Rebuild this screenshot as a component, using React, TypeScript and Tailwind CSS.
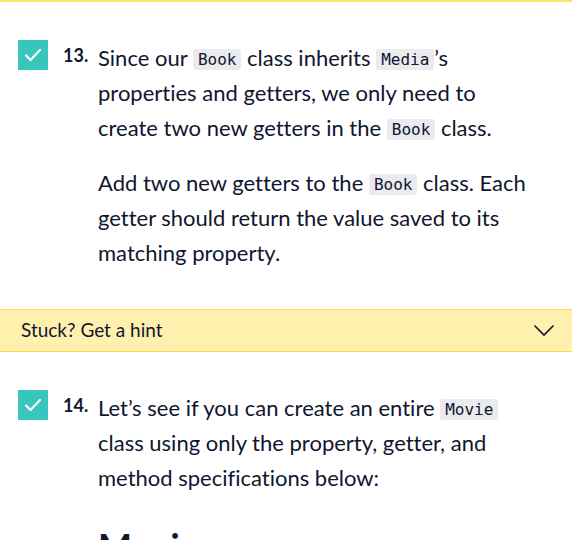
function Code({ children }: { children: string }) {
  return (
    <code className="rounded-[3px] bg-[#eaeaef] px-[5px] py-[1px] align-[1px] font-['DejaVu_Sans_Mono',monospace] text-[16px] leading-[18px] text-[#10162f]">
      {children}
    </code>
  );
}

function Check() {
  return (
    <div className="flex h-[30px] w-[30px] shrink-0 items-center justify-center bg-[#37c5bc]">
      <svg width="18" height="14" viewBox="0 0 18 14" fill="none">
        <path d="M2 7.5l4.5 4.5L16 2" stroke="white" strokeWidth="2.2" strokeLinecap="round" strokeLinejoin="round" />
      </svg>
    </div>
  );
}

function Step({ num, children }: { num: number; children: React.ReactNode }) {
  return (
    <div className="flex pl-[18px] pr-4">
      <Check />
      <span className="ml-[15px] w-[35px] shrink-0 pt-[3px] text-[18px] font-bold leading-[24px]">{num}.</span>
      <div className="flex flex-col gap-5 text-[22px] leading-[35px] [font-variant-ligatures:none]">{children}</div>
    </div>
  );
}

export default function App() {
  return (
    <div className="h-[540px] w-[572px] overflow-hidden bg-white font-['Lato',sans-serif] text-[#10162f]">
      <div className="h-[2px] bg-[#ffe36b]" />
      <div className="pt-[38px]">
        <Step num={13}>
          <p>
            Since our <Code>Book</Code> class inherits <Code>Media</Code>’s
            <br />
            properties and getters, we only need to
            <br />
            create two new getters in the <Code>Book</Code> class.
          </p>
          <p>
            Add two new getters to the <Code>Book</Code> class. Each
            <br />
            getter should return the value saved to its
            <br />
            matching property.
          </p>
        </Step>
      </div>
      <div className="mt-[39px] flex h-[43px] items-center justify-between border-y border-[#ffd84f] bg-[#fff0ad] pl-[21px] pr-[17px]">
        <span className="text-[19px] [font-variant-ligatures:none]">Stuck? Get a hint</span>
        <svg width="22" height="13" viewBox="0 0 22 13" fill="none">
          <path d="M1.5 1.5l9.5 9.5 9.5-9.5" stroke="#10162f" strokeWidth="1.6" />
        </svg>
      </div>
      <div className="pt-[38px]">
        <Step num={14}>
          <p>
            Let’s see if you can create an entire <Code>Movie</Code>
            <br />
            class using only the property, getter, and
            <br />
            method specifications below:
          </p>
          <h2 className="mt-[11px] text-[36px] font-bold leading-[40px]">Movie</h2>
        </Step>
      </div>
    </div>
  );
}
